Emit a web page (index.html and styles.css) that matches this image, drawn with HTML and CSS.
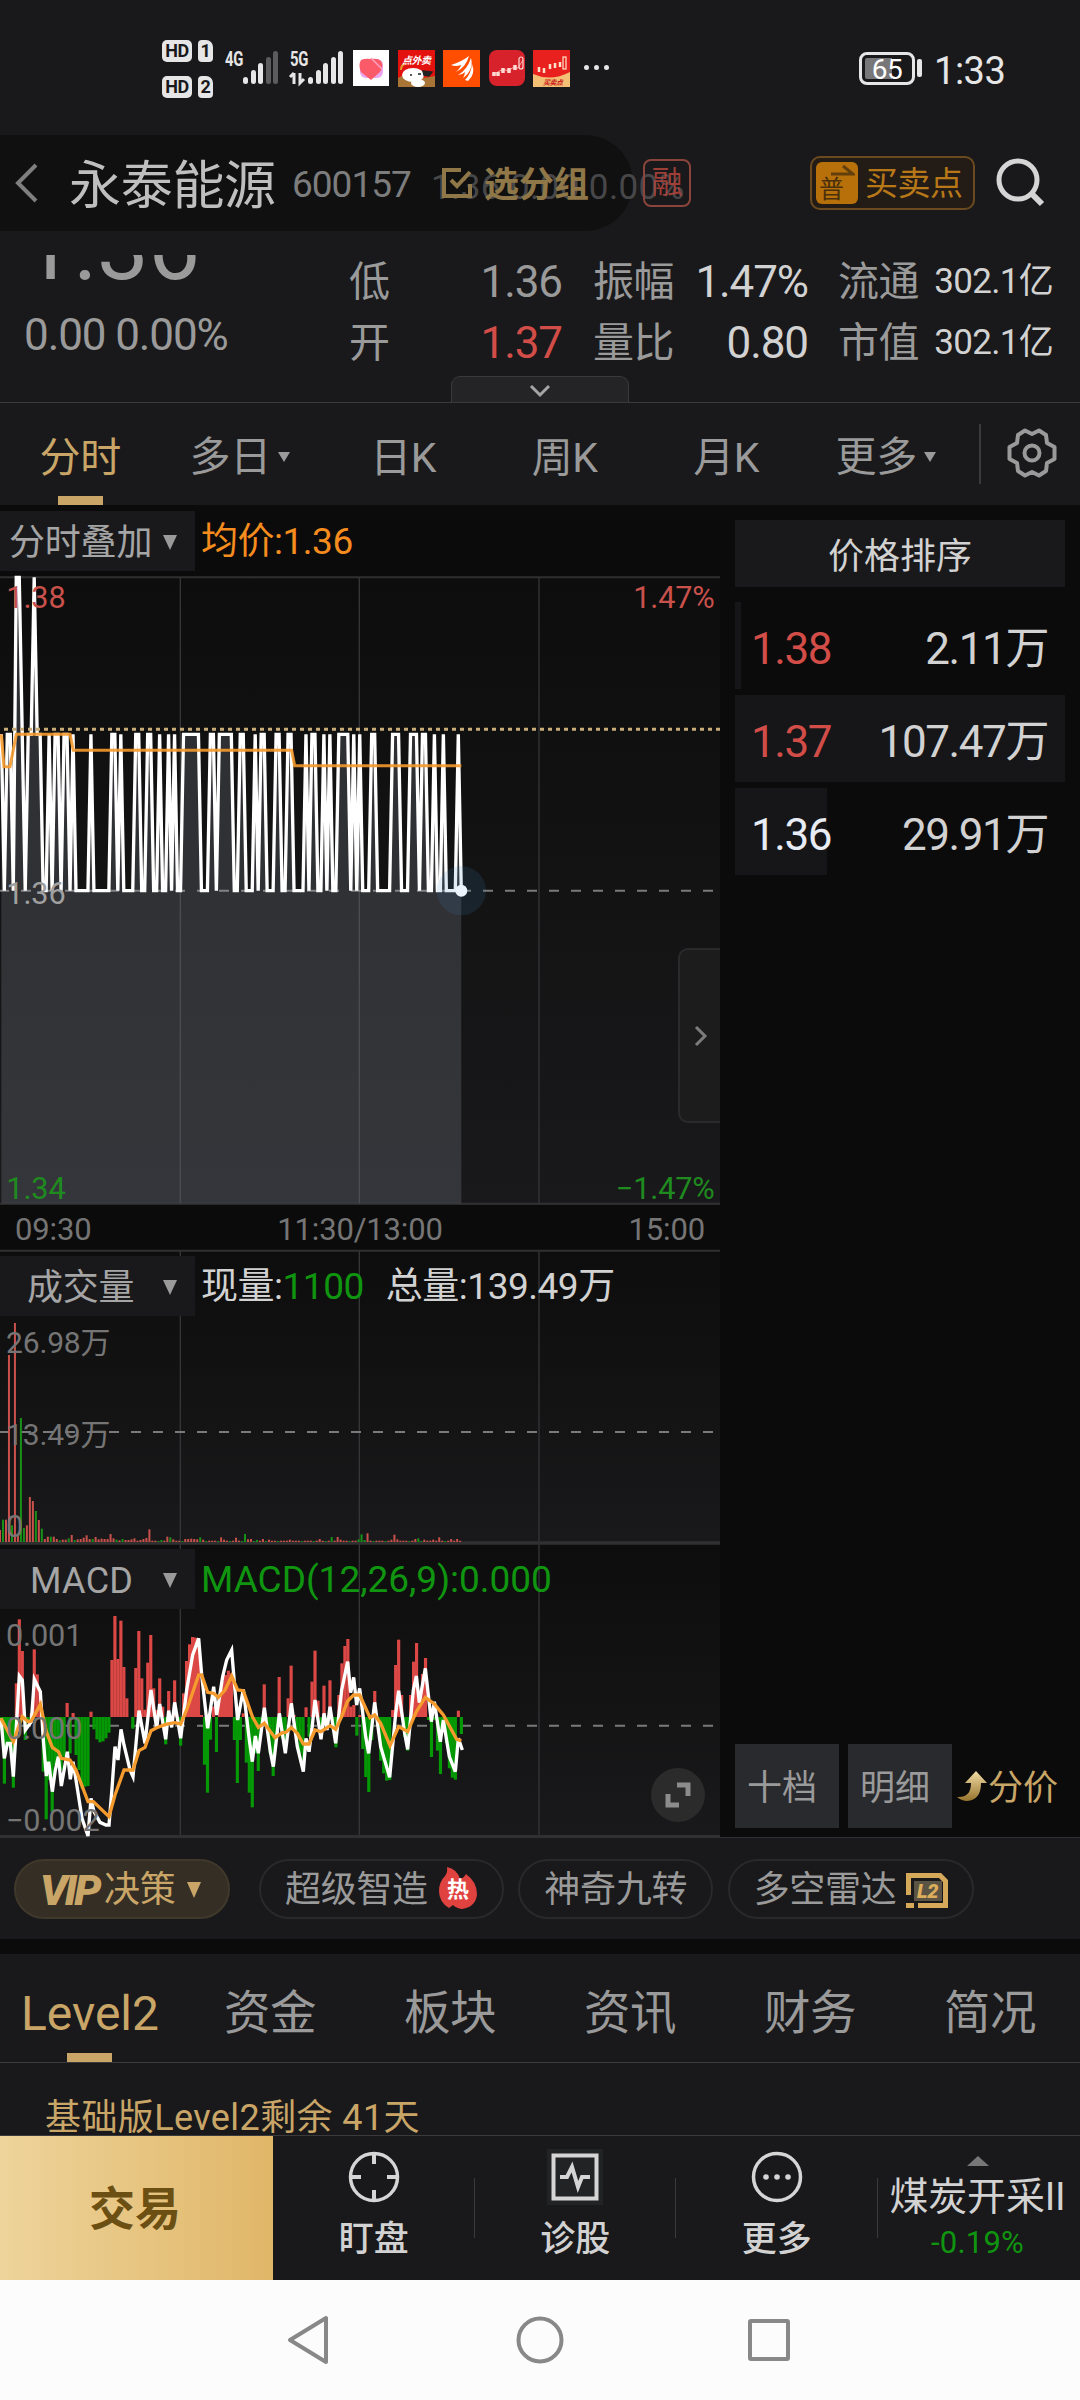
FILE: index.html
```html
<!DOCTYPE html>
<html lang="zh-CN">
    <head>
        <meta charset="utf-8">
        <title>永泰能源 600157</title>
        <link rel="stylesheet" href="styles.css">
    </head>
    <body>
        <div id="statusBar">
            <div class="hdIcons">
                <div class="hdRow"><span class="hd">HD</span><span class="sim">1</span></div>
                <div class="hdRow"><span class="hd">HD</span><span class="sim">2</span></div>
            </div>
            <svg class="signals" width="122" height="40" viewBox="0 0 122 40">
                <g fill="#e6e6e6">
                    <text class="netText" x="0" y="17" textLength="18" lengthAdjust="spacingAndGlyphs">4G</text>
                    <rect x="18" y="28" width="5" height="7" rx="2.5"/>
                    <rect x="26" y="21" width="5" height="14" rx="2.5"/>
                    <rect x="33" y="14" width="5" height="21" rx="2.5"/>
                    <rect x="41" y="8" width="5" height="27" rx="2.5" fill="#5c5c5e"/>
                    <rect x="48" y="2" width="5" height="33" rx="2.5" fill="#5c5c5e"/>
                    <text class="netText" x="65" y="17" textLength="18" lengthAdjust="spacingAndGlyphs">5G</text>
                    <path d="M69 24v11M65 28l4-4M75 24v10l4-4" stroke="#e6e6e6" stroke-width="3" fill="none"/>
                    <rect x="83" y="28" width="5" height="7" rx="2.5"/>
                    <rect x="91" y="21" width="5" height="14" rx="2.5"/>
                    <rect x="98" y="14" width="5" height="21" rx="2.5"/>
                    <rect x="106" y="8" width="5" height="27" rx="2.5"/>
                    <rect x="113" y="2" width="5" height="33" rx="2.5"/>
                </g>
            </svg>
            <div class="apps">
                <svg width="36" height="36" viewBox="0 0 36 36">
                    <rect width="36" height="36" fill="#fff"/>
                    <rect x="7" y="9" width="23" height="19" rx="6" fill="#e9a6ee"/>
                    <path d="M18 30L8 22Q5 15 8 10Q12 8 18 9Q25 8 28 11Q31 16 27 22Z" fill="#fb5a68"/>
                    <path d="M18 8L29 19" stroke="#ff9fc0" stroke-width="1.5"/>
                </svg>
                <svg width="37" height="37" viewBox="0 0 37 37">
                    <rect width="37" height="37" fill="#e3120f"/>
                    <path d="M0 28Q6 24 10 26Q20 30 37 26V37H0Z" fill="#a97536"/>
                    <ellipse cx="15" cy="25" rx="11" ry="7" fill="#fff"/>
                    <ellipse cx="20" cy="33" rx="7" ry="4" fill="#fff"/>
                    <path d="M25 21l9 1-3 4-5-1zM12 25h2M20 24h3" fill="#222" stroke="#222" stroke-width="1.5"/>
                    <path d="M3 20q0-5 4-6" stroke="#e59b2b" stroke-width="2" fill="none"/>
                    <text class="appText" x="4" y="14">点外卖</text>
                </svg>
                <svg width="37" height="37" viewBox="0 0 37 37">
                    <rect width="37" height="37" fill="#ff4e00"/>
                    <path d="M8 15Q18 12 26 6Q23 17 13 22Q18 17 18 15Q13 17 8 15ZM15 25Q24 20 28 8Q31 20 20 28Q22 24 22 22Q19 25 15 25ZM22 30Q28 24 29 14Q33 24 25 31Z" fill="#fff"/>
                </svg>
                <svg width="36" height="36" viewBox="0 0 36 36">
                    <rect width="36" height="36" rx="8" fill="#d8222b"/>
                    <path d="M3 25L9 22L14 19L19 21L25 17L29 18L34 10" stroke="#f6a9a4" stroke-width="1" fill="none"/>
                    <path d="M5 22v4M9 22v4M14 18v5M20 18v5M26 15v5" stroke="#ffd9d4" stroke-width="3.5"/>
                    <rect x="30" y="7" width="4" height="12" rx="2" stroke="#ffd9d4" stroke-width="1.2" fill="none"/>
                </svg>
                <svg width="37" height="37" viewBox="0 0 37 37">
                    <rect width="37" height="37" fill="#e8211f"/>
                    <path d="M0 24Q18 32 37 22V37H0Z" fill="#f3bf74"/>
                    <path d="M6 17v5M11 18v5M17 14v5M22 13v5M27 12v5" stroke="#ffe3c8" stroke-width="2.5"/>
                    <rect x="30" y="7" width="3" height="12" stroke="#ffe3c8" stroke-width="1.2" fill="none"/>
                    <text class="appText red" x="10" y="35">买卖点</text>
                </svg>
            </div>
            <div class="dots"><i></i><i></i><i></i></div>
            <div class="battery"><span>65</span></div>
            <div class="clock">1:33</div>
        </div>

        <div id="titleBar">
            <div class="toast"></div>
            <svg class="back" width="26" height="40" viewBox="0 0 26 40"><path d="M23 2L5 20L23 38" stroke="#7f7f7f" stroke-width="4" fill="none"/></svg>
            <div class="stockName">永泰能源</div>
            <div class="stockCode">600157</div>
            <div class="fadedQuote">1.36 0.00 0.00%</div>
            <div class="group">
                <svg width="32" height="32" viewBox="0 0 32 32"><path d="M20 3H3V29H29V17M10 13L16 19L29 5" stroke="#8f7748" stroke-width="4" fill="none"/></svg>
                <span>选分组</span>
            </div>
            <div class="rong">融</div>
            <div class="tradePoint">
                <div class="pu">普<svg width="24" height="12" viewBox="0 0 24 12"><path d="M0 10H22L12 2" stroke="#633f0c" stroke-width="3" fill="none"/></svg></div>
                <span>买卖点</span>
            </div>
            <svg class="search" width="50" height="50" viewBox="0 0 50 50"><circle cx="22" cy="22" r="19" stroke="#d5d5d5" stroke-width="5" fill="none"/><path d="M35 35L46 46" stroke="#d5d5d5" stroke-width="6"/></svg>
        </div>

        <div id="quote">
            <div class="bigPrice">1.36</div>
            <div class="change">0.00 0.00%</div>
            <div class="stats">
                <span>低</span><b class="mute">1.36</b><span>振幅</span><b>1.47%</b><span>流通</span><b class="small">302.1亿</b>
                <span>开</span><b class="up">1.37</b><span>量比</span><b>0.80</b><span>市值</span><b class="small">302.1亿</b>
            </div>
            <div class="drawer"><svg width="22" height="14" viewBox="0 0 22 14"><path d="M2 2L11 11L20 2" stroke="#a5a5a5" stroke-width="3" fill="none"/></svg></div>
        </div>

        <div id="periodTabs">
            <div class="tab active">分时</div>
            <div class="tab wide">多日<i class="tri"></i></div>
            <div class="tab">日K</div>
            <div class="tab">周K</div>
            <div class="tab">月K</div>
            <div class="tab wide">更多<i class="tri"></i></div>
            <div class="gear">
                <svg width="52" height="52" viewBox="0 0 52 52">
                    <path d="M19 3.500L26 7L33 3.500L40 8L41 16L48.500 20V32L41 36L40 44L33 48.500L26 45L19 48.500L12 44L11 36L3.500 32V20L11 16L12 8Z" stroke="#9a9a9a" stroke-width="4" stroke-linejoin="round" fill="none"/>
                    <circle cx="26" cy="26" r="7.500" stroke="#9a9a9a" stroke-width="4" fill="none"/>
                </svg>
            </div>
        </div>

        <div id="main">
            <div id="charts">
                <div class="legend">
                    <div class="picker">分时叠加<i class="tri"></i></div>
                    <span class="orange">均价:1.36</span>
                </div>
                <!-- chart units are one third of a pixel -->
                <svg class="chart" id="priceChart" width="720" height="628" viewBox="0 51 2160 1884">
                    <defs>
                        <linearGradient id="fade" x1="0" y1="0" x2="0" y2="1"><stop offset="0" stop-color="#0d0d0d"/><stop offset="1" stop-color="#19191b"/></linearGradient>
                    </defs>
                    <rect x="0" y="51" width="2160" height="1884" fill="url(#fade)"/>
                    <path d="M541 51V1935M1078 51V1935M1617 51V1935" class="grid"/>
                    <path d="M0 52H2160M0 1931H2160" class="edge"/>
                    <path d="M0 992H2160" class="dash"/>
                    <polygon id="priceFill" fill="#a0a4b4" fill-opacity=".21"/>
                    <polyline id="priceLine" fill="none" stroke="#fff" stroke-width="10"/>
                    <polyline points="4,523 12,620 30,620 49,523 210,523 220,571 875,571 884,617 1384,617" fill="none" stroke="#f59a2c" stroke-opacity=".9" stroke-width="9"/>
                    <path d="M12 508H2160" stroke="#c8ac78" stroke-width="9" stroke-dasharray="12 12"/>
                    <circle cx="1384" cy="992" r="74" fill="#3c82b4" fill-opacity=".15"/>
                    <circle cx="1384" cy="992" r="18" fill="#ebf3ff"/>
                    <text x="19" y="143" class="redText">1.38</text>
                    <text x="2144" y="143" class="redText" text-anchor="end">1.47%</text>
                    <text x="19" y="1031" class="greyText light">1.36</text>
                    <text x="19" y="1917" class="greenText">1.34</text>
                    <text x="2144" y="1917" class="greenText" text-anchor="end">−1.47%</text>
                </svg>
                <div class="collapse"><svg width="14" height="22" viewBox="0 0 14 22"><path d="M2 2L11 11L2 20" stroke="#7c7c7c" stroke-width="3" fill="none"/></svg></div>
                <div class="times"><span>09:30</span><span>11:30/13:00</span><span>15:00</span></div>

                <div class="sub">
                    <svg class="chart" id="volChart" width="720" height="293" viewBox="0 60 2160 879">
                        <rect x="0" y="60" width="2160" height="879" fill="url(#fade)"/>
                        <path d="M541 60V939M1078 60V939M1617 60V939" class="grid"/>
                        <path d="M0 62H2160M0 937H2160" class="edge"/>
                        <path d="M0 606H2160" class="dash"/>
                        <g id="volBars"></g>
                        <text x="18" y="369" class="greyText tight">26.98万</text>
                        <text x="18" y="645" class="greyText tight">13.49万</text>
                        <text x="18" y="920" class="greyText">0</text>
                    </svg>
                    <div class="legend over">
                        <div class="picker">成交量<i class="tri"></i></div>
                        <span>现量:<em class="green">1100</em></span><span class="total">总量:139.49万</span>
                    </div>
                </div>

                <div class="sub">
                    <svg class="chart" id="macdChart" width="720" height="294" viewBox="0 9 2160 882">
                        <rect x="0" y="9" width="2160" height="882" fill="url(#fade)"/>
                        <path d="M541 9V891M1078 9V891M1617 9V891" class="grid"/>
                        <path d="M0 11H2160M0 888H2160" class="edge"/>
                        <path d="M0 557H2160" class="dash"/>
                        <g id="macdBars"></g>
                        <polyline fill="none" stroke="#fff" stroke-width="10" points="3,535 13,655 22,610 31,610 40,710 58,408 67,420 76,570 94,545 103,418 121,455 130,600 139,708 146,665 157,755 166,690 175,650 184,738 202,635 211,718 219,665 228,720 246,835 264,888 273,775 282,815 300,847 318,855 327,855 336,745 345,620 354,660 363,568 372,615 390,690 399,710 408,610 417,512 435,610 453,450 470,565 479,492 497,598 506,512 515,562 524,487 542,595 560,450 578,345 596,295 605,405 623,565 641,440 650,525 668,410 680,360 695,330 704,440 713,540 730,448 748,600 757,665 766,588 775,640 793,503 811,635 820,680 838,520 856,640 874,490 892,620 910,695 918,595 927,635 936,565 945,480 963,598 972,520 981,570 990,500 1007,610 1025,450 1043,365 1052,458 1061,412 1070,495 1079,445 1097,590 1106,640 1124,487 1142,620 1169,712 1187,520 1196,452 1214,580 1223,628 1240,450 1249,408 1258,488 1276,385 1294,545 1303,485 1321,605 1330,540 1348,650 1366,695 1375,595 1387,630"/>
                        <polyline fill="none" stroke="#f59a2c" stroke-width="10" points="3,535 40,605 67,530 85,545 94,543 121,493 139,575 157,622 175,635 184,655 210,660 228,690 264,785 280,785 327,830 345,765 372,690 399,690 417,632 435,622 453,572 470,563 497,553 524,548 542,552 560,510 596,405 605,405 623,457 641,460 655,472 675,450 695,408 713,450 730,452 757,530 775,562 793,550 825,593 847,578 856,578 874,563 892,580 910,612 927,612 945,570 963,575 990,557 1007,568 1025,530 1043,483 1061,465 1079,465 1110,533 1124,525 1142,550 1170,617 1196,560 1223,575 1249,515 1276,472 1303,492 1330,525 1370,598 1384,602"/>
                        <text x="18" y="318" class="greyText">0.001</text>
                        <text x="18" y="596" class="greyText">0.000</text>
                        <text x="18" y="872" class="greyText">−0.002</text>
                    </svg>
                    <div class="legend over">
                        <div class="picker macd">MACD<i class="tri"></i></div>
                        <span class="green macd">MACD(12,26,9):0.000</span>
                    </div>
                    <div class="expand"><svg width="26" height="26" viewBox="0 0 26 26"><path d="M12 3H23V14M3 12V23H14" stroke="#8c8c8c" stroke-width="5" fill="none"/></svg></div>
                </div>
            </div>

            <div id="prices">
                <div class="priceHead">价格排序</div>
                <div class="priceRow"><i class="bar" style="width: 6px"></i><span class="up">1.38</span><span>2.11万</span></div>
                <div class="priceRow"><i class="bar" style="width: 330px"></i><span class="up">1.37</span><span>107.47万</span></div>
                <div class="priceRow"><i class="bar" style="width: 92px"></i><span class="flat">1.36</span><span>29.91万</span></div>
                <div class="priceTabs">
                    <div class="box">十档</div>
                    <div class="box">明细</div>
                    <div class="current">
                        <svg width="31" height="32" viewBox="0 0 31 32"><defs><linearGradient id="gold" x1="0" y1="0" x2="0" y2="1"><stop offset="0" stop-color="#f3dca6"/><stop offset="1" stop-color="#96742c"/></linearGradient></defs><path d="M19 1L30 13H24Q24 30 10 31Q5 31 0 27Q14 28 14 13H8Z" fill="url(#gold)"/></svg>分价
                    </div>
                </div>
            </div>
        </div>

        <div id="tools">
            <div class="pill vip"><em>VIP</em>决策<i class="tri"></i></div>
            <div class="pill">超级智造
                <svg class="fire" width="40" height="44" viewBox="0 0 40 44"><path d="M9 1Q19 3 22 13Q26 12 28 8Q39 16 39 28Q38 41 24 43Q18 42 15 39L11 42Q1 36 1 25Q1 16 7 10Q10 6 9 1Z" fill="#e0433f"/><text x="9" y="31" class="hot">热</text></svg>
            </div>
            <div class="pill">神奇九转</div>
            <div class="pill">多空雷达
                <svg width="42" height="35" viewBox="0 0 42 35"><path d="M2.500 22V2.500H34L39.500 8V32.500H12M0 32.500H8" stroke="#d6a95a" stroke-width="5" fill="none"/><rect x="8" y="8" width="28" height="20" fill="#5b5344"/><text x="11" y="25" class="l2">L2</text></svg>
            </div>
        </div>

        <div id="infoTabs">
            <div class="info active">Level2</div>
            <div class="info">资金</div>
            <div class="info">板块</div>
            <div class="info">资讯</div>
            <div class="info">财务</div>
            <div class="info">简况</div>
        </div>
        <div id="notice">基础版Level2剩余 41天</div>

        <div id="bottomBar">
            <div class="trade">交易</div>
            <div class="action">
                <svg width="56" height="56" viewBox="0 0 56 56"><circle cx="28" cy="28" r="23.500" stroke="#d5d5d5" stroke-width="3.500" fill="none"/><path d="M28 4V15M28 41V52M4 28H15M41 28H52" stroke="#d5d5d5" stroke-width="4"/></svg>
                盯盘
            </div>
            <div class="action">
                <svg width="56" height="56" viewBox="0 0 56 56"><rect width="56" height="56" fill="#222325"/><rect x="6.500" y="6.500" width="43" height="43" stroke="#d5d5d5" stroke-width="4" fill="none"/><path d="M13 28H20L25 18L31 38L35 28H43" stroke="#d5d5d5" stroke-width="4" fill="none"/></svg>
                诊股
            </div>
            <div class="action">
                <svg width="56" height="56" viewBox="0 0 56 56"><circle cx="28" cy="28" r="23.500" stroke="#d5d5d5" stroke-width="3.500" fill="none"/><g fill="#d5d5d5"><circle cx="17" cy="28" r="2.800"/><circle cx="28" cy="28" r="2.800"/><circle cx="39" cy="28" r="2.800"/></g></svg>
                更多
            </div>
            <div class="sector">
                <i></i>
                <span>煤炭开采II</span>
                <small>-0.19%</small>
            </div>
        </div>

        <div id="navBar">
            <svg width="48" height="52" viewBox="0 0 48 52"><path d="M41 4V48L5 26Z" stroke="#888" stroke-width="4" stroke-linejoin="round" fill="none"/></svg>
            <svg width="52" height="52" viewBox="0 0 52 52"><circle cx="26" cy="26" r="21.500" stroke="#888" stroke-width="4" fill="none"/></svg>
            <svg width="48" height="52" viewBox="0 0 48 52"><rect x="3" y="7" width="38" height="38" rx="1" stroke="#888" stroke-width="4" fill="none"/></svg>
        </div>
        <script src="charts.js"></script>
    </body>
</html>
```

FILE: styles.css
```css
* {
    box-sizing: border-box;
}

body {
    margin: 0;
    width: 1080px;
    height: 2400px;
    overflow: hidden;
    background-color: #19191b;
    color: #d2d2d2;
    font-family: Roboto, "Noto Sans CJK SC", sans-serif;
    letter-spacing: -0.03em;
    line-height: 1;
}

i, em {
    font-style: normal;
}

svg {
    display: block;
    flex: none;
}

.tri {
    display: inline-block;
    border: 6px solid transparent;
    border-top: 10px solid #9a9a9a;
    border-bottom: 0;
}

.up {
    color: #d24d48;
}

.green {
    color: #0f950f;
}

/* Phone status bar */
#statusBar {
    display: flex;
    height: 135px;
    padding: 0 78px 0 162px;
}

.hdIcons {
    width: 63px;
    padding-top: 40px;
}

.hdRow {
    display: flex;
    gap: 6px;
    height: 36px;
}

.hd, .sim {
    height: 22px;
    background-color: #e6e6e6;
    color: #19191b;
    border-radius: 5px;
    font-size: 18px;
    font-weight: 700;
    line-height: 22px;
    text-align: center;
}

.hd {
    width: 30px;
}

.sim {
    width: 15px;
    border-radius: 4px 7px 4px 4px;
}

.signals {
    margin-top: 49px;
}

.netText {
    font-size: 21px;
    font-weight: 700;
}

.apps {
    display: flex;
    gap: 8.5px;
    margin: 50px 0 0 6px;
}

.appText {
    font-size: 10px;
    font-weight: 700;
    font-style: italic;
    fill: #fff;
}

.appText.red {
    font-size: 7px;
    fill: #c8201c;
}

.dots {
    display: flex;
    gap: 5px;
    margin: 65px 0 0 14px;
}

.dots i {
    width: 5px;
    height: 5px;
    border-radius: 50%;
    background-color: #e6e6e6;
}

.battery {
    position: relative;
    width: 56px;
    height: 33px;
    margin: 52px 0 0 auto;
    border: 3px solid #e6e6e6;
    border-radius: 8px;
    background: linear-gradient(90deg, #77777a 62%, transparent 62%) content-box;
    padding: 3px;
    color: #fff;
    font-size: 28px;
    line-height: 23px;
    text-align: center;
}

.battery::after {
    content: "";
    position: absolute;
    right: -10px;
    top: 4px;
    width: 5px;
    height: 18px;
    border-radius: 2px;
    background-color: #e6e6e6;
}

.clock {
    width: 68px;
    margin: 52px 0 0 19px;
    font-size: 38px;
    white-space: nowrap;
    color: #e6e6e6;
}

/* Title bar with the fading add-to-group toast */
#titleBar {
    position: relative;
    display: flex;
    align-items: center;
    height: 96px;
    margin-bottom: 24px;
}

.toast {
    position: absolute;
    left: 0;
    top: 0;
    width: 633px;
    height: 96px;
    border-radius: 0 48px 48px 0;
    background-color: #101010;
}

.back, .stockName, .stockCode, .group {
    position: relative;
}

.back {
    margin-left: 13px;
}

.stockName {
    margin-left: 30px;
    padding-top: 8px;
    width: 223px;
    line-height: 56px;
    font-size: 52px;
    letter-spacing: -0.3px;
    color: #bfbfbf;
}

.stockCode {
    width: 149px;
    padding-top: 3px;
    font-size: 37px;
    letter-spacing: -1px;
    color: #7d7d7d;
}

.fadedQuote {
    position: absolute;
    left: 431px;
    top: 35px;
    font-size: 35px;
    letter-spacing: 0.4px;
    color: #47474a;
    white-space: nowrap;
}

.group {
    display: flex;
    align-items: center;
    gap: 11px;
    width: 202px;
    font-size: 35px;
    font-weight: 700;
    letter-spacing: 0;
    color: #8f7748;
}

.group span {
    padding-top: 4px;
}

.rong {
    position: relative;
    width: 48px;
    height: 48px;
    border: 2px solid #8a443c;
    border-radius: 8px;
    font-size: 31px;
    line-height: 44px;
    text-align: center;
    letter-spacing: 0;
    color: #b0443ce0;
}

.tradePoint {
    display: flex;
    align-items: center;
    width: 165px;
    height: 54px;
    margin-left: 119px;
    padding-left: 4px;
    border: 2px solid #6b4a1f;
    border-radius: 10px;
    background-color: #231c16;
    font-size: 33px;
    letter-spacing: -0.5px;
    color: #b87818;
}

.pu {
    position: relative;
    width: 42px;
    height: 42px;
    margin-right: 7px;
    padding: 15px 0 0 3px;
    border-radius: 6px;
    background-color: #b8700a;
    font-size: 25px;
    color: #4a300c;
}

.pu svg {
    position: absolute;
    left: 15px;
    top: 2px;
}

.search {
    margin-left: 21px;
}

/* Quote header, scrolled partly under the title bar */
#quote {
    position: relative;
    display: grid;
    grid-template-columns: 349px 1fr;
    grid-template-rows: 48px 99px;
    height: 148px;
    overflow: hidden;
    border-bottom: 1px solid #3a3a3c;
}

.bigPrice {
    align-self: end;
    grid-column: 1;
    padding-left: 22px;
    margin-bottom: 9px;
    font-size: 92px;
    color: #9a9a9a;
}

.change {
    grid-column: 1;
    padding: 10px 0 0 24px;
    font-size: 44px;
    letter-spacing: -0.025em;
    color: #9a9a9a;
}

.stats {
    grid-column: 2;
    grid-row: 1 / 3;
    display: grid;
    grid-template-columns: 42px 171px 115px 131px 112px 133px;
    grid-auto-rows: 61px;
    line-height: 54px;
    font-size: 41px;
    letter-spacing: -0.5px;
    color: #9a9a9a;
    white-space: nowrap;
}

.stats span:nth-child(6n+3) {
    padding-left: 31px;
}

.stats span:nth-child(6n+5) {
    padding-left: 30px;
}

.stats b {
    font-size: 44px;
    font-weight: 400;
    text-align: right;
    letter-spacing: -0.025em;
    color: #d2d2d2;
}

.stats b.mute {
    color: #9a9a9a;
}

.stats b.up {
    color: #d24d48;
}

.stats b.small {
    font-size: 35px;
    letter-spacing: -0.02em;
}

.drawer {
    position: absolute;
    left: 451px;
    bottom: 0;
    display: flex;
    justify-content: center;
    width: 178px;
    height: 26px;
    padding-top: 7px;
    border: 1px solid #3a3a3c;
    border-bottom: 0;
    border-radius: 9px 9px 0 0;
    background-color: #242426;
}

/* Period tabs */
#periodTabs {
    display: flex;
    height: 102px;
}

.tab {
    position: relative;
    display: flex;
    align-items: center;
    justify-content: center;
    gap: 7px;
    width: 161.5px;
    padding: 8px 1px 0 0;
    font-size: 41px;
    letter-spacing: -0.3px;
    color: #9a9a9a;
}

.tab.wide {
    padding: 6px 5px 0 0;
}

.tab.active, .info.active {
    color: #c9a667;
}

.tab.active::after, .info.active::after {
    content: "";
    position: absolute;
    left: 50%;
    bottom: 0;
    width: 45px;
    height: 9px;
    margin-left: -23px;
    background-color: #c9a667;
}

.gear {
    margin: 21px 0 0 10px;
    height: 60px;
    padding: 3px 0 0 25px;
    border-left: 2px solid #3a3a3c;
}

/* Charts on the left, price list on the right */
#main {
    display: flex;
    height: 1332px;
    background-color: #0b0b0b;
}

#charts {
    position: relative;
    width: 720px;
}

.legend {
    display: flex;
    align-items: center;
    height: 72px;
    font-size: 37px;
    color: #d2d2d2;
    white-space: nowrap;
}

.picker {
    display: flex;
    align-items: center;
    justify-content: space-between;
    width: 195px;
    height: 60px;
    margin-right: 6px;
    padding: 3px 18px 0 9px;
    background-color: #19191b;
    font-size: 36px;
    letter-spacing: -0.2px;
    color: #a5a5a5;
}

.picker .tri {
    border-width: 15px 7.5px 0;
}

.legend .orange {
    color: #f58c1e;
}

.legend .total {
    margin-left: 22px;
}

.legend.over {
    position: absolute;
    left: 0;
    top: 0;
}

.over .picker {
    padding-left: 27px;
}

.picker.macd {
    padding-left: 30px;
    letter-spacing: 0.3px;
}

.green.macd {
    letter-spacing: 0;
}

.chart {
    overflow: visible;
    letter-spacing: -0.03em;
}

.chart text {
    font-size: 92px;
}

.chart text.tight {
    font-size: 90px;
}

.grid {
    stroke: #353538;
    stroke-width: 4;
}

.edge {
    stroke: #303032;
    stroke-width: 6;
}

.dash {
    stroke: #7a7a7a;
    stroke-width: 6;
    stroke-dasharray: 30 36;
    stroke-dashoffset: 3;
}

.redText {
    fill: #c9514c;
}

.greenText {
    fill: #1f8b1f;
}

.greyText {
    fill: #757575;
}

.greyText.light {
    fill: #a0a0a0;
}

.collapse {
    position: absolute;
    right: 0;
    top: 443px;
    display: flex;
    align-items: center;
    justify-content: center;
    width: 42px;
    height: 175px;
    padding-left: 2px;
    border: 2px solid #2a2a2c;
    border-right: 0;
    border-radius: 10px 0 0 10px;
    background-color: #1c1c1d;
}

.times {
    display: grid;
    grid-template-columns: 1fr 1fr 1fr;
    align-items: center;
    height: 45px;
    padding: 4px 15px 0;
    font-size: 31px;
    letter-spacing: -0.005em;
    color: #757575;
}

.times span:nth-child(2) {
    text-align: center;
}

.times span:nth-child(3) {
    text-align: right;
}

.sub {
    position: relative;
}

.expand {
    position: absolute;
    left: 651px;
    bottom: 15px;
    display: flex;
    align-items: center;
    justify-content: center;
    width: 54px;
    height: 54px;
    border-radius: 50%;
    background-color: #2b2b2c;
}

#prices {
    display: flex;
    flex-direction: column;
    width: 330px;
    margin: 15px 15px 9px;
}

.priceHead {
    height: 67px;
    margin-bottom: 15px;
    background-color: #19191b;
    font-size: 36px;
    line-height: 74px;
    letter-spacing: 0;
    text-align: center;
}

.priceRow {
    position: relative;
    display: flex;
    align-items: center;
    justify-content: space-between;
    height: 87px;
    margin-bottom: 6px;
    padding: 7px 17px 0 16px;
    font-size: 44px;
    letter-spacing: -0.032em;
}

.priceRow span {
    position: relative;
}

.priceRow .flat {
    color: #e8ecf5;
}

.priceRow .bar {
    position: absolute;
    left: 0;
    top: 0;
    height: 87px;
    background-color: #161618;
}

.priceTabs {
    display: flex;
    gap: 9px;
    margin-top: auto;
    height: 84px;
    font-size: 35px;
    line-height: 90px;
    letter-spacing: 0;
    white-space: nowrap;
}

.box {
    width: 104px;
    padding-left: 12px;
    background-color: #292a2e;
    color: #9a9a9a;
}

.current {
    display: flex;
    margin-left: -4px;
    color: #c9a667;
}

.current svg {
    margin-top: 26px;
}

/* Tool pills */
#tools {
    display: flex;
    align-items: flex-start;
    height: 102px;
    padding: 21px 14px 0;
    border-top: 1px solid #303032;
}

.pill {
    display: flex;
    align-items: center;
    gap: 10px;
    height: 60px;
    margin-right: 14.5px;
    padding: 2px 24px 0;
    border: 2px solid #29292b;
    border-radius: 30px;
    font-size: 36px;
    letter-spacing: -0.3px;
    color: #9a9a9a;
    white-space: nowrap;
}

.fire {
    margin-top: -4px;
}

.pill.vip {
    width: 216px;
    margin-right: 29px;
    gap: 0;
    border-color: #40382a;
    background-color: #342e25;
    color: #c9a667;
}

.vip em {
    width: 64px;
    font-size: 43px;
    font-weight: 900;
    font-style: italic;
    letter-spacing: -3px;
}

.vip .tri {
    margin-left: 12px;
    border-width: 16px 7.5px 0;
    border-top-color: #c9a667;
}

.hot {
    font-size: 22px;
    font-weight: 700;
    fill: #fff;
}

.l2 {
    font-size: 20px;
    font-weight: 900;
    font-style: italic;
    fill: #dcae5c;
}

#infoTabs {
    display: flex;
    height: 124px;
    border-top: 15px solid #0b0b0b;
    border-bottom: 1px solid #3a3a3c;
}

.info {
    position: relative;
    width: 180px;
    padding-top: 7px;
    font-size: 46.5px;
    line-height: 105px;
    letter-spacing: -0.5px;
    text-align: center;
    color: #9a9a9a;
}

.info.active {
    font-size: 48px;
    letter-spacing: 0;
}

#notice {
    height: 73px;
    padding: 37px 0 0 45px;
    overflow: hidden;
    border-bottom: 1px solid #3a3a3c;
    font-size: 36px;
    letter-spacing: 0.4px;
    color: #c9a667;
}

/* Bottom actions */
#bottomBar {
    display: flex;
    height: 144px;
}

.trade {
    width: 273px;
    padding-right: 3px;
    background: linear-gradient(90deg, #eed49b, #e0b668);
    font-size: 46px;
    font-weight: 700;
    line-height: 147px;
    letter-spacing: 0;
    text-align: center;
    color: #6b4f13;
}

.action {
    position: relative;
    display: flex;
    flex-direction: column;
    align-items: center;
    gap: 17px;
    width: 201.5px;
    padding-top: 13px;
    font-size: 35px;
    font-weight: 500;
    letter-spacing: 0;
}

.action::after {
    content: "";
    position: absolute;
    right: 0;
    top: 42px;
    width: 1px;
    height: 60px;
    background-color: #3a3a3c;
}

.sector {
    display: flex;
    flex-direction: column;
    align-items: center;
    width: 200px;
    padding-top: 20px;
    font-size: 39px;
    letter-spacing: -0.2px;
    white-space: nowrap;
}

.sector i {
    border: 11px solid transparent;
    border-top: 0;
    border-bottom: 10px solid #777;
    margin-bottom: 12px;
}

.sector small {
    margin-top: 10px;
    font-size: 31px;
    letter-spacing: 0.2px;
    color: #0f950f;
}

#navBar {
    display: flex;
    align-items: center;
    justify-content: center;
    gap: 181px;
    height: 120px;
    background-color: #fcfcfc;
}
```

FILE: charts.js
```js
/* x position of a minute on the chart */
function minuteX(i) {
    return 4 + 8.96 * i;
}

/* Minutes where the price traded at 1.37 and 1.38, all others are 1.36 */
const high = [0, 2, 3, 7, 9, 10, 12, 13, 16, 18, 19, 21, 22, 24, 30, 37, 38, 40, 45, 46, 49, 50, 53, 56, 58,
    61, 62, 63, 64, 65, 66, 70, 71, 73, 74, 75, 76, 77, 80, 81, 85, 87, 88, 92, 93, 96, 97, 102, 104, 105,
    108, 110, 113, 114, 115, 116, 118, 120, 124, 125, 131, 132, 133, 137, 138, 139, 141, 142, 145, 148, 153];
const peak = [5, 6, 11];

let points = "";
for (let i = 0; i <= 154; i++) {
    let y = 992;
    if (high.includes(i)) y = 523;
    if (peak.includes(i)) y = 52;
    points += minuteX(i) + "," + y + " ";
}
document.querySelector("#priceLine").setAttribute("points", points);
document.querySelector("#priceFill").setAttribute("points", "4,1930 " + points + "1384,1930");

function addBar(parent, x, y, width, height, color) {
    const rect = document.createElementNS("http://www.w3.org/2000/svg", "rect");
    rect.setAttribute("x", x);
    rect.setAttribute("y", y);
    rect.setAttribute("width", width);
    rect.setAttribute("height", height);
    rect.setAttribute("fill", color);
    parent.appendChild(rect);
}

/* Volume bars. Negative numbers are falling minutes */
const opening = [36, -67, 67, 561, -50, 657, 20, -372, -42, 50, 135, 123, -93, 66, -40, 9, 16, -16, 16, 9, -5, 7, 7, -11,
    21, -6, 8, 9, 13, 20, 9, -9, 15, 8, 10, 9, 9, 24, 11, -7, 5, -9, 6, 6, 8, 11];
const spikes = { 47: 6, 48: 9, 49: 12, 50: 38, 54: -6, 56: 16, 57: -14, 58: 8, 62: 9, 63: 9, 64: 10, 65: 9, 66: 8,
    67: -14, 68: 7, 74: 14, 75: 7, 79: 13, 82: -24, 83: 8, 84: 9, 86: -6, 88: 9, 90: 7, 97: 7, 107: 9, 111: -15,
    113: 15, 114: 7, 120: -8, 121: -23, 122: -6, 123: 26, 131: 7, 132: 22, 133: 8, 139: 9, 140: -11, 142: 7,
    145: 7, 147: 14, 151: 9, 153: 9 };
const volBars = document.querySelector("#volBars");
for (let i = 0; i <= 154; i++) {
    let v = opening[i] || spikes[i] || (i % 4 === 1 ? -3 : 4);
    addBar(volBars, 9 * i * 0.996 - 3, 936 - Math.abs(v), 6, Math.abs(v), v < 0 ? "#179117" : "#c9514c");
}

/* MACD histogram, y of the free end of each bar */
const macd = [570, 731, 620, 620, 743, 430, 238, 333, 600, 540, 520, 328, 403, 455, 695, 838, 720, 815, 675, 650,
    690, 650, 489, 640, 519, 645, 690, 745, 740, 738, 515, 568, 598, 607, 604, 595, 578, 360, 228, 357,
    242, 381, 475, 531, 566, 384, 273, 415, 509, 368, 285, 445, 510, 415, 500, 613, 453, 540, 421, 540,
    617, 460, 363, 313, 291, 293, 305, 525, 674, 758, 599, 500, 636, 480, 425, 405, 392, 400, 600, 729,
    600, 520, 668, 758, 802, 640, 693, 560, 433, 560, 640, 708, 600, 411, 595, 615, 475, 377, 525, 600,
    640, 660, 502, 590, 425, 332, 482, 575, 437, 540, 421, 570, 622, 465, 370, 318, 297, 500, 495, 587,
    525, 627, 711, 756, 600, 453, 540, 662, 700, 722, 720, 510, 375, 299, 465, 590, 632, 465, 365, 309,
    480, 402, 354, 540, 651, 540, 632, 702, 545, 610, 685, 713, 719, 512, 582];
const macdBars = document.querySelector("#macdBars");
macd.forEach((y, i) => {
    const top = Math.min(y, 531);
    addBar(macdBars, minuteX(i) - 4.5, top, 9.5, Math.abs(y - 531), y > 531 ? "#059a05" : "#db4845");
});
```
